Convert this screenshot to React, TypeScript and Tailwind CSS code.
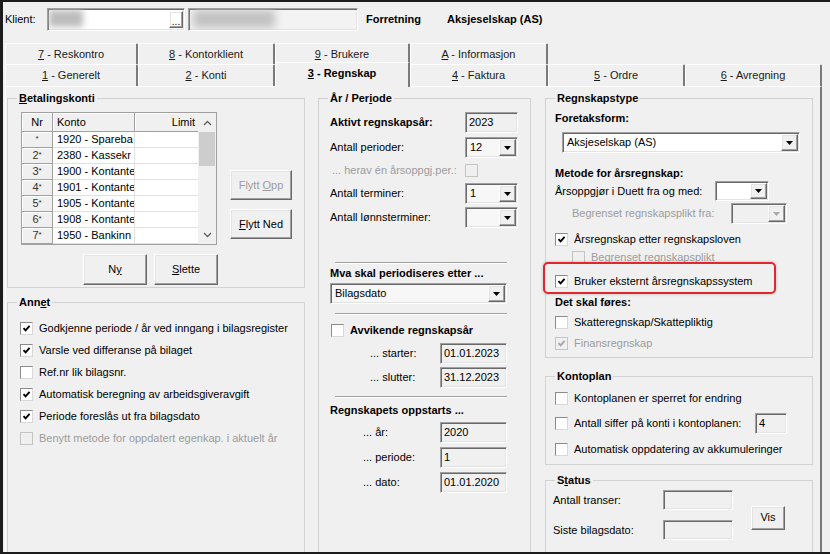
import React from 'react';

const sunken =
  'border border-t-[#a0a0a0] border-l-[#a0a0a0] border-r-white border-b-white shadow-[inset_1px_1px_0_#696969,inset_-1px_-1px_0_#e3e3e3]';
const raised =
  'border border-t-white border-l-white border-r-[#696969] border-b-[#696969] shadow-[inset_-1px_-1px_0_#a0a0a0,inset_1px_1px_0_#e3e3e3]';

const Check: React.FC<{ checked?: boolean; disabled?: boolean }> = ({ checked, disabled }) => (
  <span
    className={`w-[13px] h-[13px] shrink-0 flex items-center justify-center border ${
      disabled
        ? 'bg-[#f0f0f0] border-[#c4c4c4]'
        : 'bg-white border-t-[#8a8a8a] border-l-[#8a8a8a] border-r-[#d8d8d8] border-b-[#d8d8d8]'
    }`}
  >
    {checked && (
      <svg width="9" height="9" viewBox="0 0 9 9">
        <path d="M1.5 4.2 L3.6 6.4 L7.6 1.8" fill="none" stroke={disabled ? '#a6a6a6' : '#000'} strokeWidth="1.9" />
      </svg>
    )}
  </span>
);

const CheckRow: React.FC<{ checked?: boolean; disabled?: boolean; className?: string; children: React.ReactNode }> = ({
  checked,
  disabled,
  className,
  children,
}) => (
  <div className={`flex items-center gap-[6px] h-[16px] whitespace-nowrap ${className ?? ''}`}>
    <Check checked={checked} disabled={disabled} />
    <span className={disabled ? 'text-[#9c9c9c]' : ''}>{children}</span>
  </div>
);

const Arrow: React.FC<{ disabled?: boolean }> = ({ disabled }) => (
  <div className={`${raised} w-[17px] bg-[#f0f0f0] flex items-center justify-center shrink-0`}>
    <svg width="7" height="4" viewBox="0 0 7 4">
      <path d="M0 0h7L3.5 4z" fill={disabled ? '#a8a8a8' : '#000'} />
    </svg>
  </div>
);

const Combo: React.FC<{ value?: string; disabled?: boolean; className: string }> = ({ value, disabled, className }) => (
  <div className={`${sunken} flex items-stretch p-[1px] ${className}`}>
    <div className="flex-1 pl-[3px] flex items-center overflow-hidden whitespace-nowrap">{value}</div>
    <Arrow disabled={disabled} />
  </div>
);

const Field: React.FC<{ value?: string; className: string }> = ({ value, className }) => (
  <div className={`${sunken} pl-[3px] pt-[2px] leading-[14px] whitespace-nowrap ${className}`}>{value}</div>
);

const Button: React.FC<{ className: string; disabled?: boolean; children: React.ReactNode }> = ({
  className,
  disabled,
  children,
}) => (
  <div
    className={`${raised} bg-[#f0f0f0] flex items-center justify-center whitespace-nowrap ${
      disabled ? 'text-[#9c9c9c]' : ''
    } ${className}`}
  >
    {children}
  </div>
);

const Group: React.FC<{ title: React.ReactNode; className?: string; children: React.ReactNode }> = ({
  title,
  className,
  children,
}) => (
  <fieldset className={`border border-[#d2d2d2] min-w-0 ${className ?? ''}`}>
    <legend className="ml-[9px] px-[2px] font-bold leading-[13px]">{title}</legend>
    {children}
  </fieldset>
);

const Sep = () => <div className="ml-[5px] w-[172px] border-t border-t-[#a0a0a0] border-b border-b-white" />;

const row1 = [
  { w: 'w-[133px]', k: '7', t: ' - Reskontro' },
  { w: 'w-[137px]', k: '8', t: ' - Kontorklient' },
  { w: 'w-[135px]', k: '9', t: ' - Brukere' },
  { w: 'w-[138px]', k: 'A', t: ' - Informasjon' },
];
const row2 = [
  { w: 'w-[133px]', k: '1', t: ' - Generelt' },
  { w: 'w-[137px]', k: '2', t: ' - Konti' },
  { w: 'w-[135px]', k: '3', t: ' - Regnskap', sel: true },
  { w: 'w-[138px]', k: '4', t: ' - Faktura' },
  { w: 'w-[137px]', k: '5', t: ' - Ordre' },
  { w: 'w-[137px]', k: '6', t: ' - Avregning' },
];

// konto names are cut by the column in the original, so only the visible part is kept
const konti = [
  ['', '1920 - Spareba'],
  ['2', '2380 - Kassekr'],
  ['3', '1900 - Kontante'],
  ['4', '1901 - Kontante'],
  ['5', '1905 - Kontante'],
  ['6', '1908 - Kontante'],
  ['7', '1950 - Bankinn'],
];

const annet: [string, boolean, boolean?][] = [
  ['Godkjenne periode / år ved inngang i bilagsregister', true],
  ['Varsle ved differanse på bilaget', true],
  ['Ref.nr lik bilagsnr.', false],
  ['Automatisk beregning av arbeidsgiveravgift', true],
  ['Periode foreslås ut fra bilagsdato', true],
  ['Benytt metode for oppdatert egenkap. i aktuelt år', false, true],
];

export default function App() {
  return (
    <div className="w-[830px] h-[554px] overflow-hidden flex flex-col bg-[#f0f0f0] border-l-[3px] border-t-[2px] border-b-[2px] border-[#1c1c1c] text-[11px] leading-[13px] text-black font-['Liberation_Sans',Arial,sans-serif]">
      {/* Klient */}
      <div className="h-[41px] shrink-0 flex items-start pt-[6px] pl-[2px]">
        <div className="h-[23px] flex items-center">
          <span className="w-[42px]">Klient:</span>
          <div className={`${sunken} w-[138px] h-[23px] bg-white relative overflow-hidden flex justify-end items-center pr-[1px]`}>
            <div className="absolute left-[1px] top-[1px] w-[34px] h-[17px] bg-[#bdbdbd] blur-[3px]" />
            <div className={`${raised} w-[14px] h-[17px] flex items-end justify-center leading-[10px] text-[10px]`}>...</div>
          </div>
          <div className={`${sunken} ml-[3px] w-[170px] h-[23px] bg-[#f3f3f3] relative overflow-hidden`}>
            <div className="absolute left-[4px] top-[1px] w-[82px] h-[18px] bg-[#c2c2c2] blur-[4px]" />
          </div>
          <span className="ml-[8px] w-[81px] font-bold">Forretning</span>
          <span className="font-bold">Aksjeselskap (AS)</span>
        </div>
      </div>

      {/* Tabs */}
      <div className="shrink-0 pl-[2px]">
        <div className="flex h-[21px]">
          {row1.map((t) => (
            <div
              key={t.k}
              className={`${t.w} h-[21px] border-t border-l border-t-white border-l-white border-r-2 border-r-[#7a7a7a] rounded-t-[2px] flex items-center justify-center text-[#1a1a1a]`}
            >
              <span>
                <span className="underline">{t.k}</span>
                {t.t}
              </span>
            </div>
          ))}
        </div>
        <div className="flex h-[22px] items-end">
          {row2.map((t) =>
            t.sel ? (
              <div
                key={t.k}
                className={`${t.w} h-[25px] -mt-[2px] -mb-[1px] relative z-10 bg-[#f0f0f0] border-t border-l border-t-white border-l-white border-r-2 border-r-[#7a7a7a] rounded-t-[2px] flex items-center justify-center pb-[3px] font-bold`}
              >
                <span>
                  <span className="underline">{t.k}</span>
                  {t.t}
                </span>
              </div>
            ) : (
              <div
                key={t.k}
                className={`${t.w} h-[22px] border-t border-l border-t-white border-l-white border-r-2 border-r-[#7a7a7a] rounded-t-[2px] flex items-center justify-center text-[#1a1a1a]`}
              >
                <span>
                  <span className="underline">{t.k}</span>
                  {t.t}
                </span>
              </div>
            )
          )}
        </div>
      </div>

      {/* Panel */}
      <div className="ml-[2px] w-[817px] flex-1 min-h-0 border-t border-l border-t-white border-l-white border-r-2 border-r-[#7a7a7a] flex pt-[5px] pl-[1px]">
        {/* Left column */}
        <div className="w-[298px] flex flex-col">
          <Group
            title={
              <>
                <span className="underline">B</span>etalingskonti
              </>
            }
          >
            <div className="pl-[13px] pt-[7px] pb-[2px]">
              <div className="flex">
                <div className="w-[196px] h-[133px] border border-[#a0a0a0] bg-white flex overflow-hidden">
                  <div className="w-[176px] flex flex-col">
                    <div className="flex h-[19px] shrink-0">
                      <div className="w-[31px] bg-[#f0f0f0] border-r border-b border-[#a0a0a0] shadow-[inset_1px_1px_0_#fff] flex items-center justify-center">
                        Nr
                      </div>
                      <div className="w-[82px] bg-[#f0f0f0] border-r border-b border-[#a0a0a0] shadow-[inset_1px_1px_0_#fff] flex items-center pl-[4px]">
                        Konto
                      </div>
                      <div className="flex-1 bg-[#f0f0f0] border-b border-[#a0a0a0] shadow-[inset_1px_1px_0_#fff] flex items-center justify-end pr-[3px]">
                        Limit
                      </div>
                    </div>
                    {konti.map(([nr, k]) => (
                      <div key={k} className="flex h-[16px] shrink-0">
                        <div className="w-[31px] bg-[#f0f0f0] border-r border-b border-[#a0a0a0] shadow-[inset_1px_1px_0_#fff] flex items-center justify-center text-[#333]">
                          <span>
                            {nr}
                            <span className="text-[8px] relative -top-[2px]">*</span>
                          </span>
                        </div>
                        <div className="w-[82px] border-r border-b border-[#e0e0e0] flex items-center pl-[4px] overflow-hidden whitespace-nowrap">
                          {k}
                        </div>
                        <div className="flex-1 border-b border-[#e0e0e0]" />
                      </div>
                    ))}
                  </div>
                  <div className="w-[18px] bg-[#f0f0f0] flex flex-col">
                    <div className="h-[19px] flex items-center justify-center">
                      <svg width="9" height="6" viewBox="0 0 9 6">
                        <path d="M1 5 L4.5 1.5 L8 5" fill="none" stroke="#606060" strokeWidth="1.3" />
                      </svg>
                    </div>
                    <div className="mx-[1px] h-[34px] bg-[#cdcdcd]" />
                    <div className="flex-1" />
                    <div className="h-[19px] flex items-center justify-center">
                      <svg width="9" height="6" viewBox="0 0 9 6">
                        <path d="M1 1 L4.5 4.5 L8 1" fill="none" stroke="#606060" strokeWidth="1.3" />
                      </svg>
                    </div>
                  </div>
                </div>
                <div className="ml-[13px] mt-[58px] flex flex-col gap-[9px]">
                  <Button className="w-[62px] h-[30px]" disabled>
                    <span>
                      Flytt <span className="underline">O</span>pp
                    </span>
                  </Button>
                  <Button className="w-[62px] h-[30px]">
                    <span>
                      <span className="underline">F</span>lytt Ned
                    </span>
                  </Button>
                </div>
              </div>
              <div className="flex ml-[62px] mt-[9px] gap-[7px]">
                <Button className="w-[64px] h-[31px]">
                  <span>
                    N<span className="underline">y</span>
                  </span>
                </Button>
                <Button className="w-[64px] h-[31px]">
                  <span>
                    <span className="underline">S</span>lette
                  </span>
                </Button>
              </div>
            </div>
          </Group>
          <Group
            className="mt-[8px] flex-1 border-b-0"
            title={
              <>
                Ann<span className="underline">e</span>t
              </>
            }
          >
            <div className="pl-[12px] pt-[8px]">
              {annet.map(([t, c, d]) => (
                <div key={t} className="h-[22px] flex items-center">
                  <CheckRow checked={c} disabled={d}>
                    {t}
                  </CheckRow>
                </div>
              ))}
            </div>
          </Group>
        </div>

        {/* Middle column */}
        <div className="ml-[13px] w-[213px] flex flex-col">
          <Group
            className="flex-1 border-b-0"
            title={
              <>
                År / Per<span className="underline">i</span>ode
              </>
            }
          >
            <div className="pl-[11px] flex flex-col">
              <div className="mt-[7px] h-[21px] flex items-center">
                <span className="w-[135px] font-bold">Aktivt regnskapsår:</span>
                <Field value="2023" className="w-[53px] h-[21px]" />
              </div>
              <div className="mt-[4px] h-[21px] flex items-center">
                <span className="w-[135px]">Antall perioder:</span>
                <Combo value="12" className="w-[53px] h-[21px] bg-[#f7f7f7]" />
              </div>
              <div className="mt-[2px] h-[21px] flex items-center">
                <span className="w-[135px] pl-[2px] text-[#9c9c9c]">... herav én årsoppgj.per.:</span>
                <Check disabled />
              </div>
              <div className="mt-[2px] h-[21px] flex items-center">
                <span className="w-[135px]">Antall terminer:</span>
                <Combo value="1" className="w-[53px] h-[21px] bg-[#f7f7f7]" />
              </div>
              <div className="mt-[3px] h-[21px] flex items-center">
                <span className="w-[135px]">Antall lønnsterminer:</span>
                <Combo className="w-[53px] h-[21px] bg-[#f7f7f7]" />
              </div>
              <div className="mt-[34px]">
                <Sep />
              </div>
              <div className="mt-[2px] h-[14px] font-bold leading-[14px] whitespace-nowrap">Mva skal periodiseres etter ...</div>
              <Combo value="Bilagsdato" className="mt-[3px] w-[177px] h-[21px] bg-[#f7f7f7]" />
              <div className="mt-[9px]">
                <Sep />
              </div>
              <div className="mt-[5px] h-[21px] flex items-center gap-[6px] pl-[1px]">
                <Check />
                <span className="font-bold">Avvikende regnskapsår</span>
              </div>
              <div className="mt-[2px] h-[21px] flex items-center">
                <span className="w-[110px] pl-[40px]">... starter:</span>
                <Field value="01.01.2023" className="w-[67px] h-[21px]" />
              </div>
              <div className="mt-[3px] h-[21px] flex items-center">
                <span className="w-[110px] pl-[40px]">... slutter:</span>
                <Field value="31.12.2023" className="w-[67px] h-[21px]" />
              </div>
              <div className="mt-[8px]">
                <Sep />
              </div>
              <div className="mt-[5px] h-[14px] font-bold leading-[14px] whitespace-nowrap">Regnskapets oppstarts ...</div>
              <div className="mt-[5px] h-[21px] flex items-center">
                <span className="w-[110px] pl-[33px]">... år:</span>
                <Field value="2020" className="w-[67px] h-[21px]" />
              </div>
              <div className="mt-[4px] h-[21px] flex items-center">
                <span className="w-[110px] pl-[33px]">... periode:</span>
                <Field value="1" className="w-[67px] h-[21px]" />
              </div>
              <div className="mt-[4px] h-[21px] flex items-center">
                <span className="w-[110px] pl-[33px]">... dato:</span>
                <Field value="01.01.2020" className="w-[67px] h-[21px]" />
              </div>
            </div>
          </Group>
        </div>

        {/* Right column */}
        <div className="ml-[14px] w-[268px] flex flex-col">
          <Group title="Regnskapstype">
            <div className="pl-[9px] pb-[6px] flex flex-col">
              <div className="mt-[6px] h-[14px] leading-[14px] font-bold">Foretaksform:</div>
              <Combo value="Aksjeselskap (AS)" className="mt-[7px] ml-[7px] w-[238px] h-[21px] bg-white" />
              <div className="mt-[13px] h-[14px] leading-[14px] font-bold">Metode for årsregnskap:</div>
              <div className="mt-[1px] h-[20px] flex items-center">
                <span className="w-[160px] whitespace-nowrap">Årsoppgjør i Duett fra og med:</span>
                <Combo className="w-[54px] h-[20px] bg-white" />
              </div>
              <div className="mt-[2px] h-[21px] flex items-center">
                <span className="w-[176px] pl-[17px] whitespace-nowrap text-[#9c9c9c]">Begrenset regnskapsplikt fra:</span>
                <Combo disabled className="w-[56px] h-[21px] bg-[#f0f0f0]" />
              </div>
              <CheckRow checked className="mt-[7px]">
                Årsregnskap etter regnskapsloven
              </CheckRow>
              <CheckRow disabled className="mt-[2px] ml-[17px]">
                Begrenset regnskapsplikt
              </CheckRow>
              <div className="relative mt-[8px] h-[16px]">
                <div className="absolute left-[-12px] top-[-11px] w-[233px] h-[32px] rounded-[5px] border-2 border-[#e3262b] bg-[#f0f0f0] shadow-[0_0_3px_rgba(0,0,0,0.25)]" />
                <CheckRow checked className="relative">
                  Bruker eksternt årsregnskapssystem
                </CheckRow>
              </div>
              <div className="mt-[6px] h-[14px] leading-[14px] font-bold">Det skal føres:</div>
              <CheckRow className="mt-[5px]">Skatteregnskap/Skattepliktig</CheckRow>
              <CheckRow checked disabled className="mt-[5px]">
                Finansregnskap
              </CheckRow>
            </div>
          </Group>
          <Group title="Kontoplan" className="mt-[12px]">
            <div className="pl-[9px] pb-[7px] flex flex-col">
              <CheckRow className="mt-[7px]">Kontoplanen er sperret for endring</CheckRow>
              <div className="mt-[7px] h-[21px] flex items-center">
                <div className="w-[200px]">
                  <CheckRow>Antall siffer på konti i kontoplanen:</CheckRow>
                </div>
                <Field value="4" className="w-[32px] h-[21px]" />
              </div>
              <CheckRow className="mt-[7px]">Automatisk oppdatering av akkumuleringer</CheckRow>
            </div>
          </Group>
          <Group
            className="mt-[9px] flex-1 border-b-0"
            title={
              <>
                S<span className="underline">t</span>atus
              </>
            }
          >
            <div className="pl-[7px] pt-[3px] flex items-center">
              <div className="flex flex-col">
                <div className="h-[20px] flex items-center">
                  <span className="w-[110px]">Antall transer:</span>
                  <Field className="w-[70px] h-[20px]" />
                </div>
                <div className="mt-[10px] h-[20px] flex items-center">
                  <span className="w-[110px]">Siste bilagsdato:</span>
                  <Field className="w-[70px] h-[20px]" />
                </div>
              </div>
              <Button className="ml-[18px] mt-[5px] w-[34px] h-[24px]">Vis</Button>
            </div>
          </Group>
        </div>
      </div>
    </div>
  );
}
